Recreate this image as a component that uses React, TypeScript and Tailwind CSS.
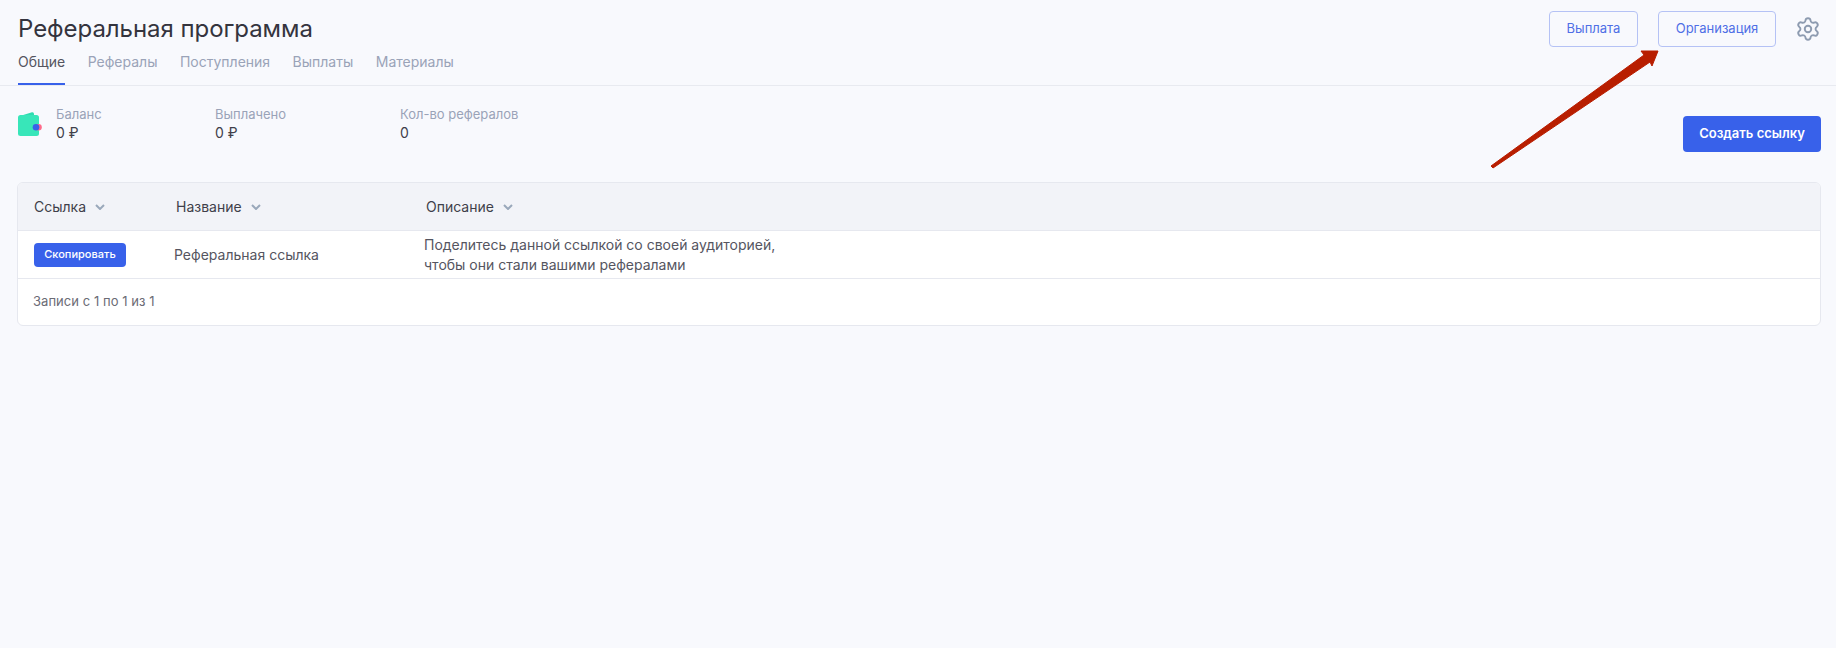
import React from 'react';
import { Settings } from 'lucide-react';

const tabs = ['Общие', 'Рефералы', 'Поступления', 'Выплаты', 'Материалы'];

const stats = [
  { label: 'Баланс', value: '0 ₽', width: 'w-[159px]' },
  { label: 'Выплачено', value: '0 ₽', width: 'w-[185px]' },
  { label: 'Кол-во рефералов', value: '0', width: 'w-[160px]' },
];

const columns = [
  { name: 'Ссылка', width: 'w-[142px]' },
  { name: 'Название', width: 'w-[250px]' },
  { name: 'Описание', width: 'flex-1' },
];

const App: React.FC = () => {
  return (
    <div className="relative min-h-[648px] bg-[#f8f9fd] font-['Inter',sans-serif] text-[#33333d]">
      {/* Header */}
      <header className="h-[86px] border-b border-[#e8eaf0] pl-[18px] pr-[15px] flex justify-between">
        <div>
          <h1 className="pt-[13px] text-[24px] leading-[32px] tracking-[-0.05px] font-normal text-[#34343e]">Реферальная программа</h1>
          <nav className="mt-[5px] flex gap-[22.5px]">
            {tabs.map((tab, i) => (
              <a
                key={tab}
                className={`h-[35px] text-[14px] leading-[20px] pt-[2px] ${
                  i === 0 ? 'text-[#55555f] border-b-2 border-[#3861ea]' : 'text-[#9aa3b8]'
                }`}
              >
                {tab}
              </a>
            ))}
          </nav>
        </div>
        <div className="flex items-start pt-[11px]">
          <button className="h-[36px] w-[89px] rounded border border-[#b5c2f5] text-[13px] text-[#4f6fe6]">Выплата</button>
          <button className="ml-[20px] h-[36px] w-[118px] rounded border border-[#b5c2f5] text-[13px] text-[#4f6fe6]">Организация</button>
          <Settings size={26} strokeWidth={1.75} className="ml-[19px] mt-[5px] text-[#8d9bb0]" />
        </div>
      </header>

      {/* Stats */}
      <section className="pl-[18px] pr-[15px] pt-[18px] flex justify-between">
        <div className="flex">
          <svg width="24" height="24" viewBox="0 0 24 24" className="mt-[8px] mr-[14px] shrink-0">
            <path d="M2 4 L14 0.3 Q16 0 16 2 V4 Z" fill="#2fdcb0" />
            <rect x="0" y="3" width="21" height="21" rx="2.5" fill="#38e6b9" />
            <circle cx="20.5" cy="15.3" r="3.3" fill="#ff6b8a" />
            <circle cx="18" cy="15.3" r="3.3" fill="#3861ea" />
          </svg>
          {stats.map((s) => (
            <div key={s.label} className={s.width}>
              <div className="text-[13px] leading-[20px] text-[#9aa3b8]">{s.label}</div>
              <div className="-mt-[1px] text-[14px] leading-[20px] text-[#3f3f4a]">{s.value}</div>
            </div>
          ))}
        </div>
        <button className="mt-[12px] h-[36px] w-[138px] rounded bg-[#3861ea] text-[13px] font-semibold text-white">Создать ссылку</button>
      </section>

      {/* Table */}
      <div className="ml-[17px] mt-[30px] w-[1804px] rounded-md border border-[#e6e8ef] bg-white overflow-hidden">
        <div className="h-[48px] bg-[#f2f3f8] border-b border-[#e6e8ef] flex items-center pl-[16px]">
          {columns.map((c) => (
            <div key={c.name} className={`${c.width} flex items-center gap-[9px] text-[14px] text-[#3f3f4a]`}>
              {c.name}
              <svg width="10" height="6" viewBox="0 0 10 6" fill="none" className="mt-[1px]">
                <path d="M1 1 L5 5 L9 1" stroke="#9aa8bb" strokeWidth="2" />
              </svg>
            </div>
          ))}
        </div>
        <div className="h-[48px] border-b border-[#e6e8ef] flex items-center pl-[16px] text-[14px] text-[#55555f]">
          <div className="w-[140px]">
            <button className="h-[24px] w-[92px] rounded bg-[#3861ea] text-[11px] font-medium text-white">Скопировать</button>
          </div>
          <div className="w-[250px]">Реферальная ссылка</div>
          <div className="leading-[20px]">
            Поделитесь данной ссылкой со своей аудиторией,
            <br />
            чтобы они стали вашими рефералами
          </div>
        </div>
        <div className="h-[46px] flex items-center pl-[15px] text-[13px] tracking-[0.05px] text-[#6b6b75]">Записи с 1 по 1 из 1</div>
      </div>

      {/* Arrow annotation */}
      <svg width="1836" height="648" className="absolute inset-0 pointer-events-none">
        <path d="M1491 166 L1644 55 L1641 51 L1658 51 L1652 66 L1650 62 L1493 168 Z" fill="#b81e00" stroke="#b81e00" strokeWidth="1" strokeLinejoin="round" />
      </svg>
    </div>
  );
};

export default App;
